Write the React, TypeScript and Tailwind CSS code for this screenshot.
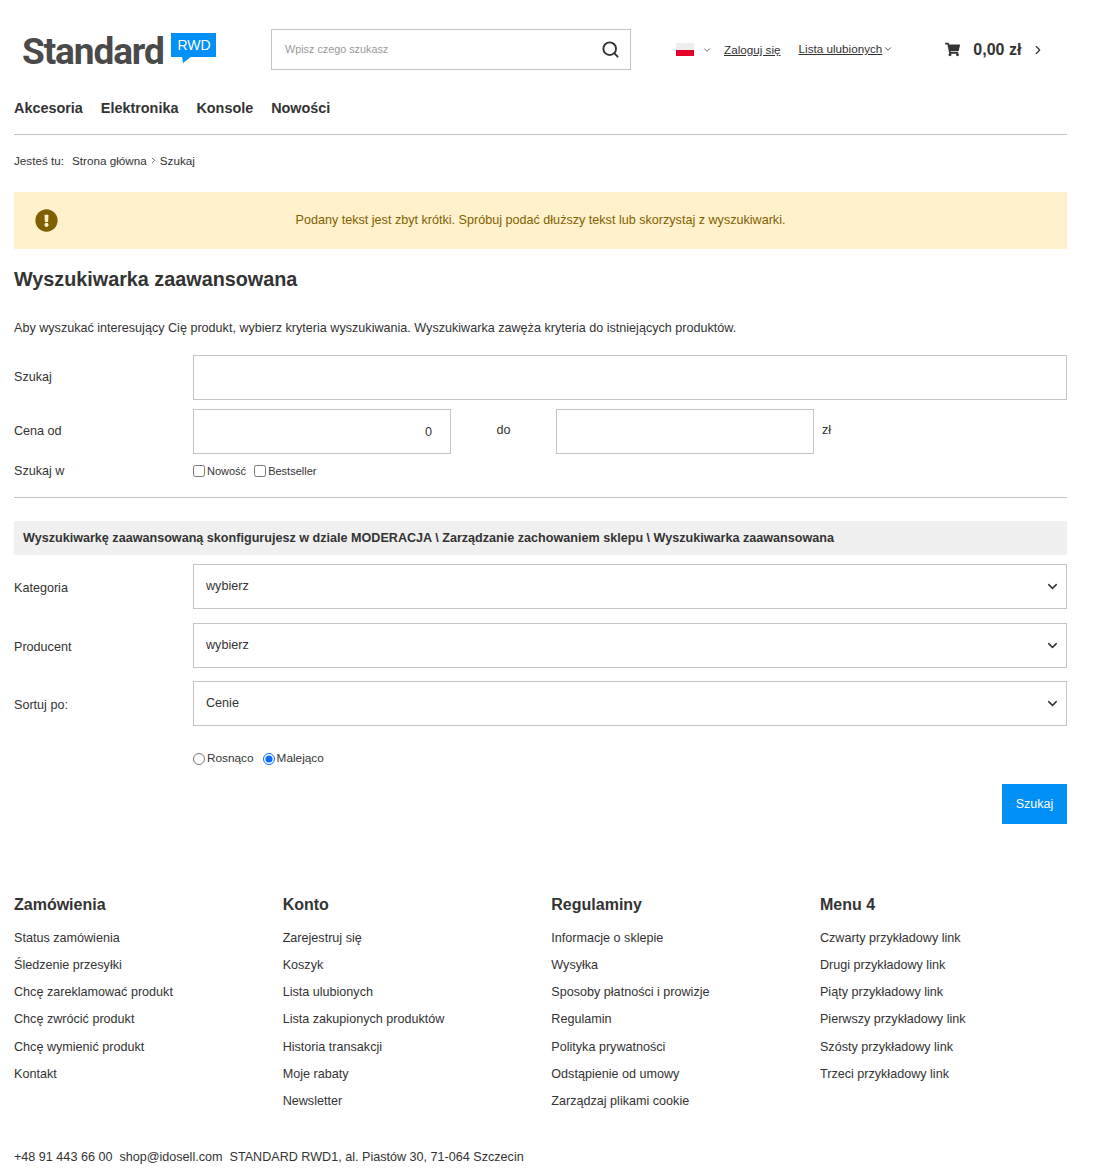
import { ChevronDown, ChevronRight, Search } from "lucide-react";
import { FaExclamationCircle, FaShoppingCart } from "react-icons/fa";

const footerColumns = [
  {
    title: "Zamówienia",
    links: ["Status zamówienia", "Śledzenie przesyłki", "Chcę zareklamować produkt", "Chcę zwrócić produkt", "Chcę wymienić produkt", "Kontakt"],
  },
  {
    title: "Konto",
    links: ["Zarejestruj się", "Koszyk", "Lista ulubionych", "Lista zakupionych produktów", "Historia transakcji", "Moje rabaty", "Newsletter"],
  },
  {
    title: "Regulaminy",
    links: ["Informacje o sklepie", "Wysyłka", "Sposoby płatności i prowizje", "Regulamin", "Polityka prywatności", "Odstąpienie od umowy", "Zarządzaj plikami cookie"],
  },
  {
    title: "Menu 4",
    links: ["Czwarty przykładowy link", "Drugi przykładowy link", "Piąty przykładowy link", "Pierwszy przykładowy link", "Szósty przykładowy link", "Trzeci przykładowy link"],
  },
];

const SelectRow = ({ label, value, className }: { label: string; value: string; className: string }) => (
  <div className={`flex items-center ${className}`}>
    <label className="w-[179px] shrink-0 pt-[4px] text-[12.6px]">{label}</label>
    <div className="relative flex-1">
      <select
        defaultValue={value}
        className="h-[45px] w-full appearance-none border border-[#c4c4c4] bg-white pl-3 text-[12.6px] text-[#333] outline-none"
      >
        <option>{value}</option>
      </select>
      <ChevronDown size={15} strokeWidth={2.4} className="pointer-events-none absolute right-[7px] top-[15px] text-[#333]" />
    </div>
  </div>
);

const App = () => {
  return (
    <div className="h-[1168px] overflow-hidden bg-white pl-[14px] pr-[33px] font-['Liberation_Sans',Arial,sans-serif] text-[#333]">
      {/* header */}
      <header className="flex h-[82px] items-start">
        <div className="relative h-[82px] w-[257px] shrink-0">
          <span className="absolute left-[8px] top-[29px] font-['Roboto',sans-serif] text-[37px] leading-[46px] font-bold tracking-[-1.1px] text-[#4a4a4a]">
            Standard
          </span>
          <span className="absolute left-[157px] top-[33px] flex h-[24px] w-[45px] items-center justify-center bg-[#0090f6] pl-[1px] text-[14px] leading-none text-white">
            RWD
          </span>
          <svg className="absolute left-[168px] top-[56px]" width="10" height="7" viewBox="0 0 10 7">
            <path d="M0 0h10L1 7z" fill="#0090f6" />
          </svg>
        </div>
        <div className="mt-[29px] flex h-[41px] w-[360px] shrink-0 items-center justify-between border border-[#c4c4c4] pl-[13px] pr-[10px]">
          <span className="text-[10.8px] text-[#999]">Wpisz czego szukasz</span>
          <Search size={19} strokeWidth={2.4} className="text-[#333]" />
        </div>
        <div className="ml-[45px] mt-[43px] flex h-[13px] w-[18px] shrink-0 flex-col">
          <div className="h-[6.5px] bg-[#eee]" />
          <div className="h-[6.5px] bg-[#e4002b]" />
        </div>
        <ChevronDown size={10} className="ml-[8px] mt-[45px] shrink-0 text-[#555]" />
        <a className="ml-[12px] mt-[43px] text-[11.7px] leading-[14px] underline">Zaloguj się</a>
        <a className="ml-[18px] mt-[42px] text-[11.7px] leading-[14px] underline">Lista ulubionych</a>
        <ChevronDown size={10} className="ml-[1px] mt-[44px] shrink-0 text-[#333]" />
        <FaShoppingCart size={15} className="ml-[52px] mt-[42px] shrink-0 text-[#333]" />
        <span className="ml-[13px] mt-[40px] text-[16px] leading-[19px] font-bold">0,00 zł</span>
        <ChevronRight size={14} strokeWidth={2} className="ml-[10px] mt-[43px] shrink-0 text-[#333]" />
      </header>

      {/* nav */}
      <nav className="flex h-[53px] gap-[18px] border-b border-[#c4c4c4] pt-[17px] text-[14.4px] leading-[18px] font-bold">
        <a>Akcesoria</a>
        <a>Elektronika</a>
        <a>Konsole</a>
        <a>Nowości</a>
      </nav>

      <div className="flex h-[57px] items-center pb-[6px] text-[11.7px]">
        <span className="mr-2">Jesteś tu:</span>
        <span>Strona główna</span>
        <ChevronRight size={9} strokeWidth={2.4} className="mx-[2px] text-[#555]" />
        <span>Szukaj</span>
      </div>

      {/* alert */}
      <div className="relative flex h-[57px] items-center justify-center bg-[#fff1cc] text-[12.6px] text-[#7f6000]">
        <FaExclamationCircle size={23} className="absolute left-[21px] top-[17px] text-[#7f6000]" />
        <span>Podany tekst jest zbyt krótki. Spróbuj podać dłuższy tekst lub skorzystaj z wyszukiwarki.</span>
      </div>

      <h1 className="mt-[18px] text-[19.8px] leading-[24px] font-bold">Wyszukiwarka zaawansowana</h1>

      <p className="mt-[29px] text-[12.6px] leading-[16px]">
        Aby wyszukać interesujący Cię produkt, wybierz kryteria wyszukiwania. Wyszukiwarka zawęża kryteria do istniejących produktów.
      </p>

      {/* form */}
      <div className="mt-[19px] flex items-center">
        <label className="w-[179px] shrink-0 text-[12.6px]">Szukaj</label>
        <input className="h-[45px] flex-1 border border-[#c4c4c4] outline-none" />
      </div>

      <div className="mt-[9px] flex items-center">
        <label className="w-[179px] shrink-0 text-[12.6px]">Cena od</label>
        <input
          defaultValue="0"
          className="h-[45px] w-[258px] border border-[#c4c4c4] pr-[18px] text-right text-[12.6px] outline-none"
        />
        <span className="w-[105px] pb-[2px] text-center text-[12.6px]">do</span>
        <input className="h-[45px] w-[258px] border border-[#c4c4c4] outline-none" />
        <span className="ml-[8px] pb-[2px] text-[12.6px]">zł</span>
      </div>

      <div className="mt-[9px] flex h-[16px] items-center">
        <label className="w-[179px] shrink-0 text-[12.6px]">Szukaj w</label>
        <label className="flex items-center text-[11px]">
          <input type="checkbox" className="mr-[2px] h-[12px] w-[12px]" />
          Nowość
        </label>
        <label className="ml-[8px] flex items-center text-[11px]">
          <input type="checkbox" className="mr-[2px] h-[12px] w-[12px]" />
          Bestseller
        </label>
      </div>

      <hr className="mt-[18px] border-[#c4c4c4]" />

      <div className="mt-[23px] flex h-[34px] items-center bg-[#f0f0f0] pl-[9px] text-[12.6px] font-bold">
        Wyszukiwarkę zaawansowaną skonfigurujesz w dziale MODERACJA \ Zarządzanie zachowaniem sklepu \ Wyszukiwarka zaawansowana
      </div>

      <SelectRow label="Kategoria" value="wybierz" className="mt-[9px]" />
      <SelectRow label="Producent" value="wybierz" className="mt-[14px]" />
      <SelectRow label="Sortuj po:" value="Cenie" className="mt-[13px]" />

      <div className="ml-[179px] mt-[25px] flex h-[16px] items-center text-[11.8px]">
        <label className="flex items-center">
          <input type="radio" name="order" className="mr-[2px] h-[12px] w-[12px]" />
          Rosnąco
        </label>
        <label className="ml-[9px] flex items-center">
          <input type="radio" name="order" defaultChecked className="mr-[2px] h-[12px] w-[12px] accent-[#0a6cff]" />
          Malejąco
        </label>
      </div>

      <div className="mt-[17px] flex justify-end">
        <button className="h-[40px] w-[65px] bg-[#0090f6] text-[12.5px] text-white">Szukaj</button>
      </div>

      {/* footer */}
      <footer className="mt-[70px] grid grid-cols-[repeat(4,268.67px)]">
        {footerColumns.map((col) => (
          <div key={col.title}>
            <h3 className="text-[16px] leading-[22px] font-bold">{col.title}</h3>
            <ul className="mt-[12px] flex flex-col">
              {col.links.map((link) => (
                <li key={link} className="h-[27.15px] text-[12.6px] leading-[20px]">
                  {link}
                </li>
              ))}
            </ul>
          </div>
        ))}
      </footer>

      <div className="mt-[31px] flex gap-[7px] text-[12.6px] leading-[16px]">
        <span>+48 91 443 66 00</span>
        <span>shop@idosell.com</span>
        <span>STANDARD RWD1, al. Piastów 30, 71-064 Szczecin</span>
      </div>
    </div>
  );
};

export default App;
